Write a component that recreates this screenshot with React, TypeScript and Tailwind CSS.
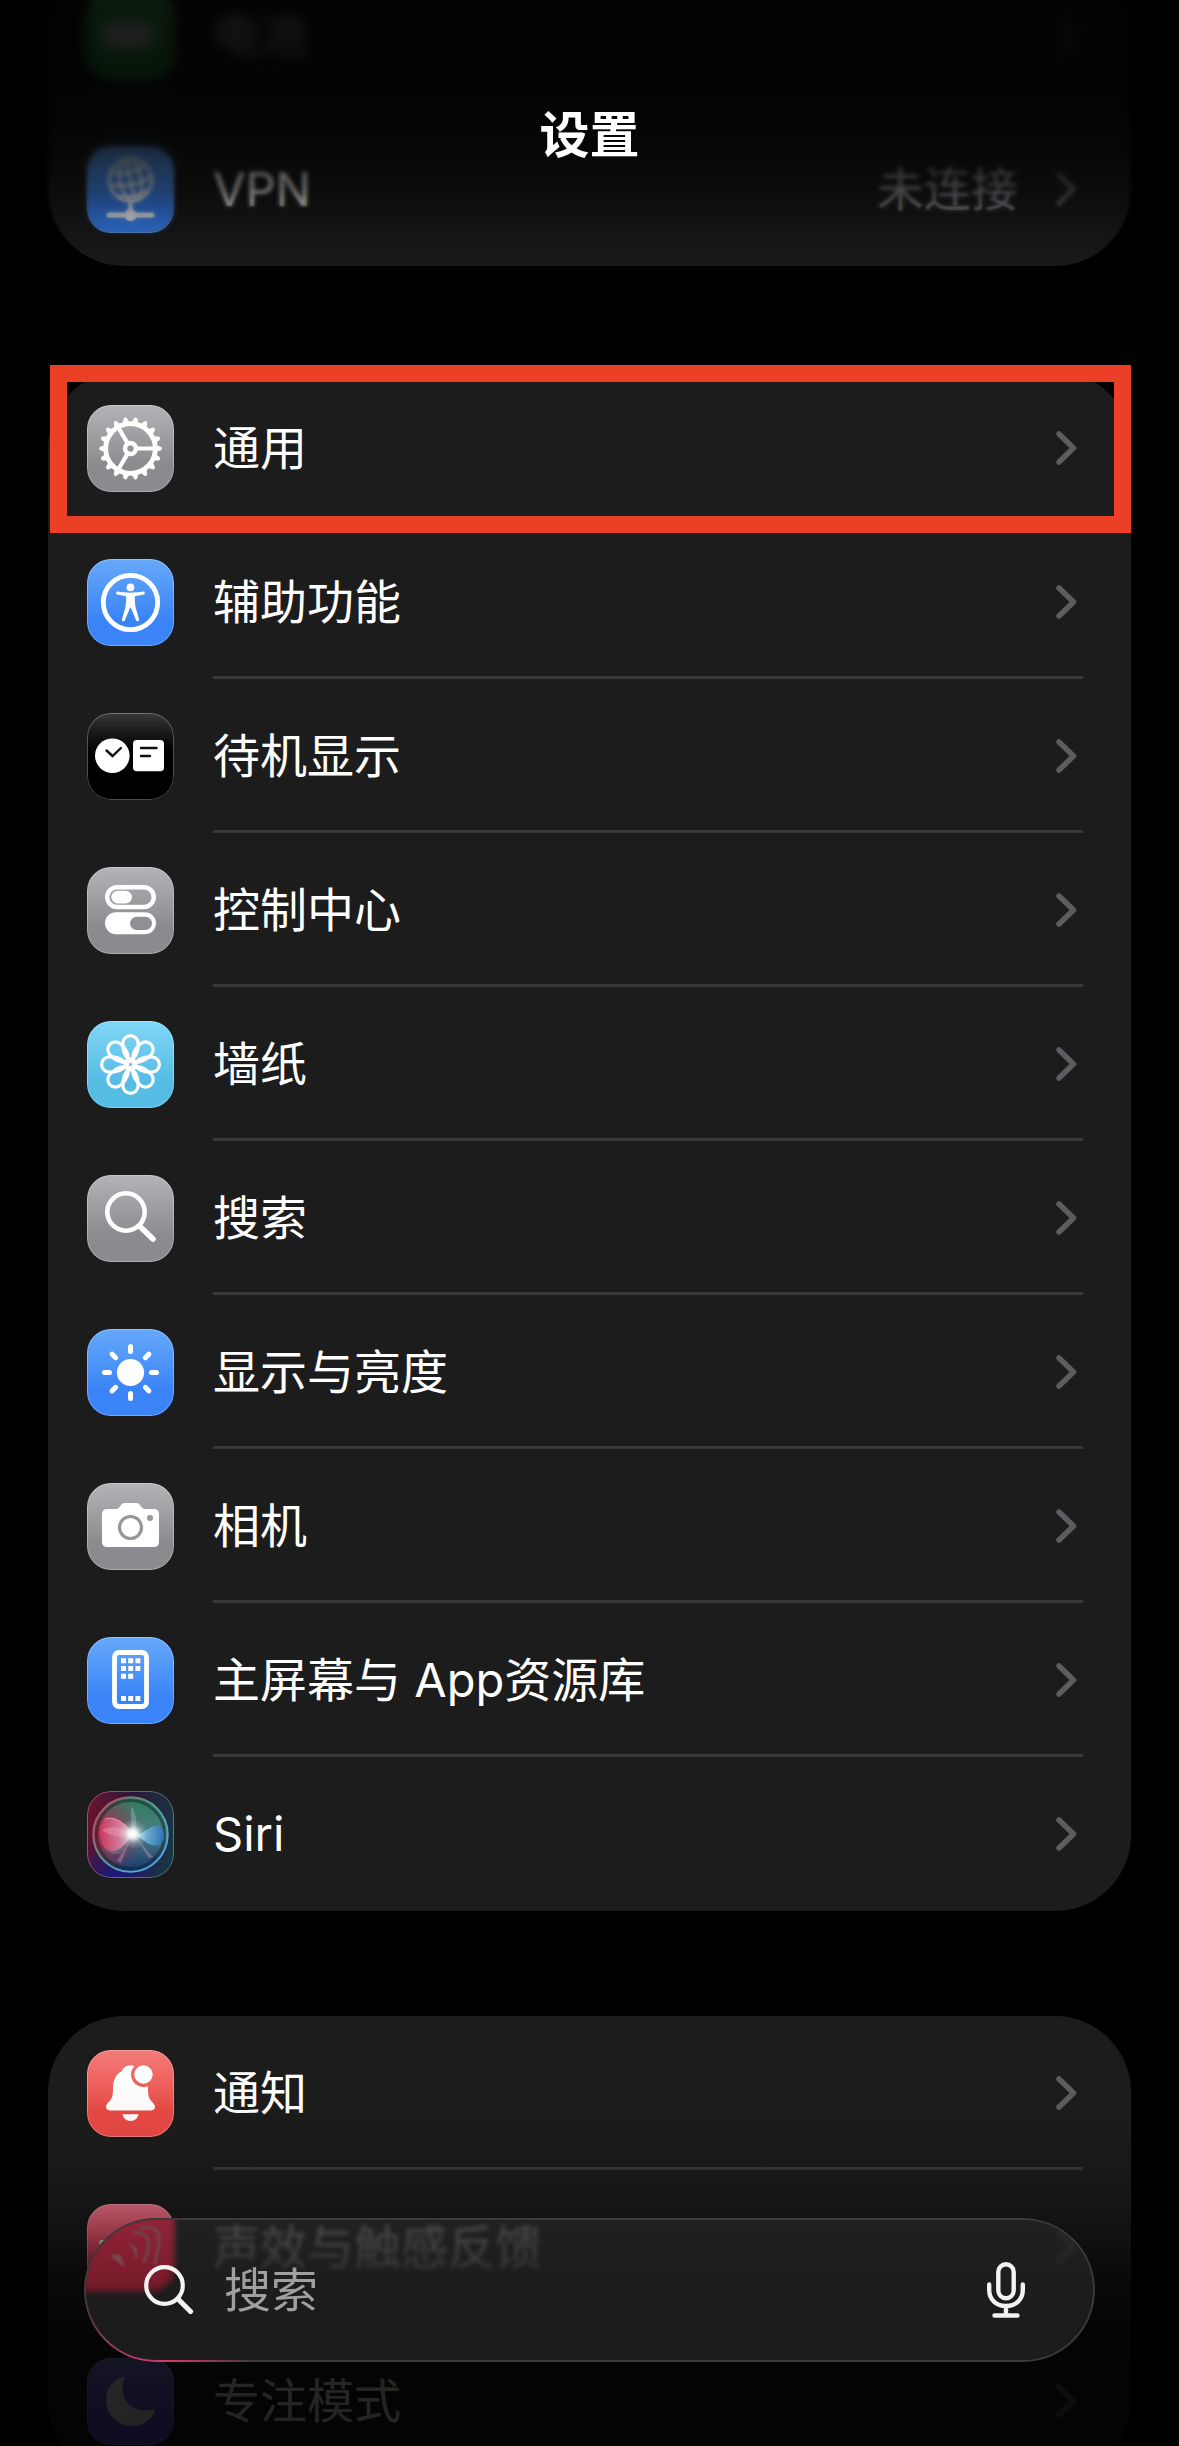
import { ReactNode } from "react";

type Item = {
  label: string;
  tile: string;
  icon: ReactNode;
  value?: string;
  highlighted?: boolean;
};

const tiles = {
  gray: "bg-linear-to-b from-[#b4b4b8] to-[#8a8a8f] to-70%",
  blue: "bg-linear-to-b from-[#66a8f9] to-[#3a84f7] to-70%",
  cyan: "bg-linear-to-b from-[#80d6f6] to-[#55bce4] to-70%",
  black: "bg-linear-to-b from-[#3a3a3a] to-black to-60%",
  green: "bg-linear-to-b from-[#68d56f] to-[#35c04c] to-70%",
  red: "bg-linear-to-b from-[#f37a78] to-[#ea4a45] to-70%",
  pink: "bg-linear-to-b from-[#f5748c] to-[#ee3558] to-70%",
  indigo: "bg-linear-to-b from-[#8a84e8] to-[#6a5cf0] to-70%",
  siri: "bg-[#16202c]",
};

const Glyph = ({ children }: { children: ReactNode }) => (
  <svg viewBox="0 0 87 87" className="size-full" fill="none" stroke="none" aria-hidden="true">
    {children}
  </svg>
);

const BatteryIcon = () => (
  <Glyph>
    <rect x="17" y="31" width="47" height="25" rx="8" fill="#fff" />
    <path d="M67 39c4 1 4 8 0 9z" fill="#fff" />
  </Glyph>
);

const VpnIcon = () => (
  <Glyph>
    <g stroke="#fff" strokeWidth="2.6">
      <circle cx="43.5" cy="34" r="21.3" />
      <g transform="rotate(-12 43.5 34)">
        <ellipse cx="43.5" cy="34" rx="10.5" ry="21.3" />
        <path d="M43.5 12.7v42.6M26 22c10 6 25 6 35 0M22.5 35c12 5 30 5 42 0M27 47c10 4 23 4 33 0" />
      </g>
      <path d="M43.5 56v12" strokeWidth="4" />
      <path d="M22 69h43" strokeWidth="5" strokeLinecap="round" />
    </g>
    <circle cx="43.5" cy="69" r="6" fill="#fff" />
  </Glyph>
);

const GearIcon = () => (
  <Glyph>
    <g transform="translate(43.5 43.5)">
      {Array.from({ length: 18 }, (_, i) => (
        <path
          key={i}
          d="M25-3.6 29.8-2Q31.4-1.4 31.4 0 31.4 1.4 29.8 2L25 3.6z"
          fill="#fff"
          transform={`rotate(${i * 20})`}
        />
      ))}
      <circle r="24.8" stroke="#fff" strokeWidth="4.8" />
      <circle r="5.5" stroke="#fff" strokeWidth="4.4" />
      {[0, 120, 240].map((angle) => (
        <path key={angle} d="M6.5 0H24" stroke="#fff" strokeWidth="4.2" transform={`rotate(${angle})`} />
      ))}
    </g>
  </Glyph>
);

const AccessibilityIcon = () => (
  <Glyph>
    <circle cx="43.5" cy="43.5" r="27.2" stroke="#fff" strokeWidth="4.8" />
    <circle cx="43.5" cy="28.3" r="3.9" fill="#fff" />
    <path
      d="M30.6 32.6c8 1.5 17.8 1.5 25.8 0a1.5 1.5 0 0 1 .5 2.9l-8.3 1.6c-.6.2-.8.5-.8 1.1.1 6 .4 9 1.5 12.6l2.7 9.4a1.6 1.6 0 0 1-3 1.1L43.9 48.5h-.8L38 61.3a1.6 1.6 0 0 1-3-1.1l2.7-9.4c1.1-3.6 1.4-6.6 1.5-12.6 0-.6-.2-.9-.8-1.1l-8.3-1.6a1.5 1.5 0 0 1 .5-2.9z"
      fill="#fff"
    />
  </Glyph>
);

const StandByIcon = () => (
  <Glyph>
    <circle cx="25.3" cy="42.7" r="17.3" fill="#fff" />
    <path d="M19.5 37.5 25.5 43 34 35" stroke="#111" strokeWidth="2.4" strokeLinecap="round" />
    <rect x="46" y="27" width="31" height="31.3" rx="3.8" fill="#fff" />
    <path d="M54 35h15.5M54 43h9" stroke="#111" strokeWidth="2.4" strokeLinecap="round" />
  </Glyph>
);

const ControlCenterIcon = () => (
  <Glyph>
    <rect x="20.2" y="20.2" width="46.6" height="19.8" rx="9.9" stroke="#fff" strokeWidth="4.4" />
    <rect x="24.3" y="23.8" width="20.7" height="12.6" rx="6.3" fill="#fff" />
    <rect x="18" y="45.2" width="51" height="22" rx="11" fill="#fff" />
    <rect x="43" y="49.7" width="22" height="13.2" rx="6.6" fill="#8f8f94" />
  </Glyph>
);

const WallpaperIcon = () => (
  <Glyph>
    <g transform="translate(43.5 43.5)" stroke="#fff" strokeWidth="3.2">
      {Array.from({ length: 8 }, (_, i) => (
        <path
          key={i}
          d="M-7.6-21.3A7.6 7.6 0 0 1 7.6-21.3C8-16 7-12 4.5-8L0-3.5-4.500-8C-7-12-8-16-7.6-21.3z"
          transform={`rotate(${i * 45})`}
        />
      ))}
      <circle r="5.4" strokeWidth="3" />
    </g>
  </Glyph>
);

const SpotlightIcon = () => (
  <Glyph>
    <circle cx="39" cy="37" r="18.7" stroke="#fff" strokeWidth="4.6" />
    <path d="M53 51.5 66 64" stroke="#fff" strokeWidth="5.6" strokeLinecap="round" />
  </Glyph>
);

const SunIcon = () => (
  <Glyph>
    <circle cx="43.5" cy="43.5" r="13.6" fill="#fff" />
    {Array.from({ length: 8 }, (_, i) => (
      <path
        key={i}
        d="M43.5 17.500v5"
        stroke="#fff"
        strokeWidth="5"
        strokeLinecap="round"
        transform={`rotate(${i * 45} 43.5 43.5)`}
      />
    ))}
  </Glyph>
);

const CameraIcon = () => (
  <Glyph>
    <path
      d="M20.5 26h8c2 0 2.8-.6 4-2l1.8-2.2c1-1.3 2-1.8 4-1.8h10.4c2 0 3 .5 4 1.8l1.8 2.2c1.2 1.4 2 2 4 2h8c3.7 0 5.5 1.8 5.5 5.5v27c0 3.7-1.8 5.5-5.5 5.5h-46c-3.7 0-5.5-1.8-5.5-5.5v-27c0-3.7 1.8-5.5 5.5-5.5z"
      fill="#fff"
    />
    <circle cx="43.5" cy="44.5" r="11" stroke="#96969b" strokeWidth="3.2" />
    <circle cx="63" cy="35" r="3" fill="#96969b" />
  </Glyph>
);

const HomeScreenIcon = () => (
  <Glyph>
    <rect x="27.5" y="15.5" width="32" height="54" rx="4.5" stroke="#fff" strokeWidth="4.8" />
    <path
      d="M34 21.3h5v5h-5zm7.2 0h5v5h-5zm7.2 0h5v5h-5zM34 29h5v5h-5zm7.2 0h5v5h-5zm7.2 0h5v5h-5zM34 36.7h5v5h-5zm7.2 0h5v5h-5zM34 59h5v5h-5zm7.2 0h5v5h-5zm7.2 0h5v5h-5z"
      fill="#fff"
    />
  </Glyph>
);

const SiriIcon = () => (
  <Glyph>
    <defs>
      <linearGradient id="siri-bg" x1="0" y1="0.3" x2="1" y2="0.5">
        <stop offset="0" stopColor="#6a1230" />
        <stop offset="0.45" stopColor="#2a1838" />
        <stop offset="1" stopColor="#173645" />
      </linearGradient>
      <linearGradient id="siri-orb" x1="0.5" y1="0" x2="0.5" y2="1">
        <stop offset="0" stopColor="#2f7a5c" />
        <stop offset="0.5" stopColor="#4c7f84" />
        <stop offset="1" stopColor="#12376e" />
      </linearGradient>
      <linearGradient id="siri-ring" x1="0.1" y1="0.2" x2="0.8" y2="0.9">
        <stop offset="0" stopColor="#b0586c" />
        <stop offset="0.45" stopColor="#4fa58c" />
        <stop offset="1" stopColor="#5aa5e6" />
      </linearGradient>
      <radialGradient id="siri-red" cx="0.1" cy="0.5" r="0.6">
        <stop offset="0" stopColor="#b01c40" />
        <stop offset="1" stopColor="#b01c40" stopOpacity="0" />
      </radialGradient>
      <radialGradient id="siri-navy" cx="0.35" cy="1" r="0.5">
        <stop offset="0" stopColor="#1c1a80" />
        <stop offset="1" stopColor="#1c1a80" stopOpacity="0" />
      </radialGradient>
      <linearGradient id="siri-pink" x1="0" y1="0" x2="1" y2="0">
        <stop offset="0" stopColor="#d8325c" />
        <stop offset="1" stopColor="#f0b8cc" />
      </linearGradient>
      <linearGradient id="siri-blue" x1="0" y1="0" x2="1" y2="0">
        <stop offset="0" stopColor="#b4ecf8" />
        <stop offset="1" stopColor="#2670c4" />
      </linearGradient>
      <radialGradient id="siri-glow">
        <stop offset="0" stopColor="#fff" />
        <stop offset="0.35" stopColor="#fff" stopOpacity="0.9" />
        <stop offset="1" stopColor="#c8f4f0" stopOpacity="0" />
      </radialGradient>
    </defs>
    <rect width="87" height="87" fill="url(#siri-bg)" />
    <rect width="87" height="87" fill="url(#siri-navy)" />
    <circle cx="43.5" cy="43.5" r="37" fill="url(#siri-orb)" />
    <circle cx="43.5" cy="43.5" r="37" fill="url(#siri-red)" />
    <circle cx="43.5" cy="43.5" r="34" stroke="#0c2226" strokeOpacity="0.5" strokeWidth="3" />
    <circle cx="43.5" cy="43.5" r="37.3" stroke="url(#siri-ring)" strokeWidth="1.8" />
    <path d="M45 43C38 30 26 24 16 31c-8 8-2 32 12 32 8 0 12-9 17-20z" fill="#68b0b8" fillOpacity="0.35" />
    <path d="M46 43C37 30 26 25 18 28c-9 5-6 31 7 32 9 0 14-8 21-17z" fill="url(#siri-pink)" fillOpacity="0.8" />
    <path d="M46 43C37 30 26 25 18 28" stroke="#ff8aa0" strokeWidth="1.4" strokeOpacity="0.8" />
    <path d="M46 43C34 35 20 35 15 39c6 6 20 8 31 4z" fill="#ffb0c0" fillOpacity="0.35" />
    <path d="M46 43c10 3 15-9 24-8 9 1 10 17 1 19-10 2-15-7-25-11z" fill="url(#siri-blue)" fillOpacity="0.8" />
    <path d="M46 43 66 66 62 67zM46 43 30 70 34 72z" fill="#d890b8" fillOpacity="0.4" />
    <path d="M44 42 44 15C49 20 51 32 48 44z" fill="#8ce0c0" fillOpacity="0.35" />
    <circle cx="46" cy="43" r="15" fill="url(#siri-glow)" fillOpacity="0.55" />
    <circle cx="46" cy="43" r="9" fill="url(#siri-glow)" />
  </Glyph>
);

const BellIcon = () => (
  <Glyph>
    <defs>
      <mask id="bell-cut">
        <rect width="87" height="87" fill="#fff" />
        <circle cx="56.5" cy="24.5" r="12.5" fill="#000" />
      </mask>
    </defs>
    <path
      d="M43.5 15.6c-4.6 0-7.5 2-8.5 5.3-6 3-9 9-9 17 0 8-.8 10.5-4.5 14.3-1.7 1.8-2.5 3-2.5 4.6 0 2.2 1.6 3.6 4 3.6h41c2.4 0 4-1.4 4-3.6 0-1.6-.8-2.8-2.5-4.6-3.7-3.8-4.5-6.3-4.5-14.3 0-8-3-14-9-17-1-3.3-3.9-5.3-8.5-5.3z"
      fill="#fff"
      mask="url(#bell-cut)"
    />
    <path d="M35.5 64.3h16c-.8 4.2-4 6.7-8 6.7s-7.2-2.5-8-6.7z" fill="#fff" />
    <circle cx="56.5" cy="24.5" r="9.2" fill="#fff" />
  </Glyph>
);

const SpeakerIcon = () => (
  <Glyph>
    <path d="M15 36h8l9-8c1.5-1 3-.4 3 1.5v28c0 2-1.5 2.500-3 1.5l-9-8h-8c-1.5 0-2.500-1-2.500-2.500v-10c0-1.5 1-2.500 2.500-2.500z" fill="#fff" />
    <path d="M43 36c4 4 4 11 0 15M52 30c7 7 7 20 0 27M61 24c11 11 11 28 0 39" stroke="#fff" strokeWidth="4" strokeLinecap="round" />
  </Glyph>
);

const MoonIcon = () => (
  <Glyph>
    <path
      d="M36.4 18.7C26 21.5 19 31 19 42c0 14 11 26 25.5 26 10.5 0 19.5-6 23.3-14.5.5-1.5-.3-2.6-2-2.1-3 .8-5 1-7.8 1-13 0-22.500-9-22.500-22 0-3.5.8-6.5 1.7-9.2.6-1.7.2-2.7-.8-2.5z"
      fill="#fff"
    />
  </Glyph>
);

const groups: Item[][] = [
  [
    { label: "电池", tile: tiles.green, icon: <BatteryIcon /> },
    { label: "VPN", tile: tiles.blue, icon: <VpnIcon />, value: "未连接" },
  ],
  [
    { label: "通用", tile: tiles.gray, icon: <GearIcon />, highlighted: true },
    { label: "辅助功能", tile: tiles.blue, icon: <AccessibilityIcon /> },
    { label: "待机显示", tile: tiles.black, icon: <StandByIcon /> },
    { label: "控制中心", tile: tiles.gray, icon: <ControlCenterIcon /> },
    { label: "墙纸", tile: tiles.cyan, icon: <WallpaperIcon /> },
    { label: "搜索", tile: tiles.gray, icon: <SpotlightIcon /> },
    { label: "显示与亮度", tile: tiles.blue, icon: <SunIcon /> },
    { label: "相机", tile: tiles.gray, icon: <CameraIcon /> },
    { label: "主屏幕与 App资源库", tile: tiles.blue, icon: <HomeScreenIcon /> },
    { label: "Siri", tile: tiles.siri, icon: <SiriIcon /> },
  ],
  [
    { label: "通知", tile: tiles.red, icon: <BellIcon /> },
    { label: "声效与触感反馈", tile: tiles.pink, icon: <SpeakerIcon /> },
    { label: "专注模式", tile: tiles.indigo, icon: <MoonIcon /> },
  ],
];

const Row = ({ item, last }: { item: Item; last: boolean }) => (
  <li className="relative">
    <a href="#" className="flex h-[154px] items-center gap-[39px] pl-[39px]">
      <span className={`relative size-[87px] shrink-0 overflow-hidden rounded-3xl ${item.tile}`}>
        {item.icon}
        <span className="absolute inset-0 rounded-3xl border border-white/30" />
      </span>
      <span
        className={`mr-12 flex h-full flex-1 items-center border-b-3 pt-[3px] pr-1.5 ${last ? "border-transparent" : "border-[#39393b]"}`}
      >
        <span className="flex-1">{item.label}</span>
        {item.value && <span className="mr-[38px] text-[#98989f]">{item.value}</span>}
        <svg viewBox="0 0 21 34" className="h-[34px] w-[21px]" fill="none" aria-hidden="true">
          <path d="M3 3 17.5 17 3 31" stroke="#5c5c61" strokeWidth="5.5" strokeLinecap="round" strokeLinejoin="round" />
        </svg>
      </span>
    </a>
    {item.highlighted && (
      <span className="pointer-events-none absolute -top-1.5 right-0 -bottom-2 left-0.5 border-17 border-[#eb4026]" />
    )}
  </li>
);

const SearchBar = () => (
  <form
    role="search"
    onSubmit={(e) => e.preventDefault()}
    className="absolute inset-x-[84px] bottom-[84px] flex h-36 items-center overflow-hidden rounded-full bg-[#252525]/72 pr-[70px] pl-[60px] backdrop-blur-[2px]"
  >
    {/* tint of the row lying under the glass */}
    <span className="absolute -top-1 -left-2 h-[77px] w-[98px] rounded-br-3xl bg-linear-to-b from-[#94243a] to-[#741a28] blur-[3px]" />
    <svg viewBox="0 0 60 50" className="absolute top-2 left-6 h-[50px] w-[60px] blur-[1px]" fill="none" aria-hidden="true">
      <path d="M2 30q9-4 11 0l4 10q-2 1-15-10z" fill="#7a4650" />
      <path d="M20 16q8 4 9 8t-1 10q-2-11-8-18z" fill="#7a4650" />
      <path d="M25 7c12-2 18 6 15 17l-4 13M32 2c14-3 20 2 19 14l-4 22" stroke="#73404a" strokeWidth="3.5" />
    </svg>
    <span className="absolute inset-0 rounded-full border-2 border-[#3b3b3b]" />
    <span className="absolute inset-0 rounded-full border-2 border-[#d0386c] [mask-image:radial-gradient(circle_at_75px_135px,#000_20px,transparent_95px)]" />
    <svg viewBox="0 0 50 50" className="relative size-[50px] shrink-0" fill="none" stroke="#f4f2f3" aria-hidden="true">
      <circle cx="20.5" cy="20.5" r="18.3" strokeWidth="4.2" />
      <path d="M34 34 46.5 46.5" strokeWidth="5.2" strokeLinecap="round" />
    </svg>
    <input
      type="text"
      aria-label="搜索"
      placeholder="搜索"
      className="relative ml-[30px] min-w-0 flex-1 bg-transparent outline-none placeholder:text-[#a0a0a0] placeholder:opacity-100"
    />
    <button type="button" aria-label="听写" className="relative">
      <svg viewBox="0 0 38 56" className="h-14 w-[38px]" fill="none" stroke="#f4f2f3" strokeWidth="4.4" strokeLinecap="round" aria-hidden="true">
        <rect x="11.3" y="2.2" width="15.4" height="34" rx="7.7" />
        <path d="M2.2 22.5v5.500c0 9.500 7 16 16.800 16s16.800-6.500 16.800-16v-5.500M19 44v9M7.500 53.500h23" />
      </svg>
    </button>
  </form>
);

const App = () => (
  <div className="relative h-screen overflow-hidden bg-black font-['Inter','Noto_Sans_CJK_SC',sans-serif] text-[47px] leading-[60px] text-white">
    <main className="-mt-[42px] flex flex-col gap-[105px] px-12">
      {groups.map((items, i) => (
        <ul key={i} className="rounded-[76px] bg-[#1c1c1c]">
          {items.map((item, j) => (
            <Row key={item.label} item={item} last={j === items.length - 1} />
          ))}
        </ul>
      ))}
    </main>

    {/* content blurs and fades out under the title */}
    <div className="pointer-events-none absolute inset-x-0 top-0 h-[250px] backdrop-blur-[2px] [mask-image:linear-gradient(#000_75%,transparent)]" />
    <div className="pointer-events-none absolute inset-x-0 top-0 h-[180px] backdrop-blur-[6px] [mask-image:linear-gradient(#000_60%,transparent)]" />
    <div className="pointer-events-none absolute inset-x-0 top-0 h-[300px] bg-[linear-gradient(rgba(0,0,0,0.88)_0,rgba(0,0,0,0.88)_80px,rgba(0,0,0,0.76)_145px,rgba(0,0,0,0.56)_190px,rgba(0,0,0,0.26)_230px,rgba(0,0,0,0.08)_266px,transparent_300px)]" />
    <header className="absolute inset-x-0 top-0 pt-[105px] text-center">
      <h1 className="text-[50px] leading-[60px] font-semibold">设置</h1>
    </header>

    <div className="pointer-events-none absolute inset-x-0 bottom-0 h-[400px] bg-[linear-gradient(transparent_30px,rgba(0,0,0,0.04)_85px,rgba(0,0,0,0.15)_122px,rgba(0,0,0,0.28)_165px,rgba(0,0,0,0.4)_190px,rgba(0,0,0,0.7)_237px,rgba(0,0,0,0.84)_287px,rgba(0,0,0,0.87))]" />
    <SearchBar />
  </div>
);

export default App;
